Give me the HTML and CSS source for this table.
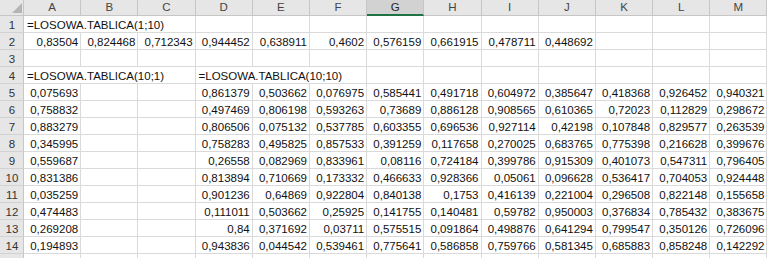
FILE: index.html
```html
<!DOCTYPE html>
<html lang="pl">
<head>
    <meta charset="UTF-8">
    <meta name="viewport" content="width=device-width, initial-scale=1.0">
    <title>LOSOWA.TABLICA</title>
    <link rel="stylesheet" href="styles.css">
</head>
<body>

    <!-- Spreadsheet grid, filled in by the script below -->
    <div class="sheet" id="sheet">
        <div class="cell head corner">
            <svg width="10" height="10" viewBox="0 0 10 10"><polygon points="10,0 10,10 0,10" fill="#b4b4b4"/></svg>
        </div>
    </div>

    <script>
        var columns = ['A', 'B', 'C', 'D', 'E', 'F', 'G', 'H', 'I', 'J', 'K', 'L', 'M'];
        var activeColumn = 'G';

        // text cells are [text, span], numbers are plain strings
        var rows = [
            [['=LOSOWA.TABLICA(1;10)', 3]],
            ['0,83504', '0,824468', '0,712343', '0,944452', '0,638911', '0,4602', '0,576159', '0,661915', '0,478711', '0,448692'],
            [],
            [['=LOSOWA.TABLICA(10;1)', 3], ['=LOSOWA.TABLICA(10;10)', 3]],
            ['0,075693', '', '', '0,861379', '0,503662', '0,076975', '0,585441', '0,491718', '0,604972', '0,385647', '0,418368', '0,926452', '0,940321'],
            ['0,758832', '', '', '0,497469', '0,806198', '0,593263', '0,73689', '0,886128', '0,908565', '0,610365', '0,72023', '0,112829', '0,298672'],
            ['0,883279', '', '', '0,806506', '0,075132', '0,537785', '0,603355', '0,696536', '0,927114', '0,42198', '0,107848', '0,829577', '0,263539'],
            ['0,345995', '', '', '0,758283', '0,495825', '0,857533', '0,391259', '0,117658', '0,270025', '0,683765', '0,775398', '0,216628', '0,399676'],
            ['0,559687', '', '', '0,26558', '0,082969', '0,833961', '0,08116', '0,724184', '0,399786', '0,915309', '0,401073', '0,547311', '0,796405'],
            ['0,831386', '', '', '0,813894', '0,710669', '0,173332', '0,466633', '0,928366', '0,05061', '0,096628', '0,536417', '0,704053', '0,924448'],
            ['0,035259', '', '', '0,901236', '0,64869', '0,922804', '0,840138', '0,1753', '0,416139', '0,221004', '0,296508', '0,822148', '0,155658'],
            ['0,474483', '', '', '0,111011', '0,503662', '0,25925', '0,141755', '0,140481', '0,59782', '0,950003', '0,376834', '0,785432', '0,383675'],
            ['0,269208', '', '', '0,84', '0,371692', '0,03711', '0,575515', '0,091864', '0,498876', '0,641294', '0,799547', '0,350126', '0,726096'],
            ['0,194893', '', '', '0,943836', '0,044542', '0,539461', '0,775641', '0,586858', '0,759766', '0,581345', '0,685883', '0,858248', '0,142292']
        ];

        var sheet = document.getElementById('sheet');

        function addCell(className, text) {
            var cell = document.createElement('div');
            cell.className = 'cell ' + className;
            cell.textContent = text;
            sheet.appendChild(cell);
        }

        function addRow(label, row) {
            addCell('rowhead', label);
            var used = 0;
            row.forEach(function(value) {
                if (Array.isArray(value)) {
                    addCell('text span' + value[1], value[0]);
                    used += value[1];
                } else {
                    addCell('num', value);
                    used += 1;
                }
            });
            for (; used < columns.length; used++) {
                addCell('num', '');
            }
        }

        // Column headers
        columns.forEach(function(name) {
            addCell(name === activeColumn ? 'head active' : 'head', name);
        });

        rows.forEach(function(row, i) {
            addRow(i + 1, row);
        });

        // next row only peeks in at the bottom edge
        addRow('', []);
    </script>

</body>
</html>
```

FILE: styles.css
```css
body {
    margin: 0;
    background-color: #fff;
    font-family: "Liberation Sans", Arial, sans-serif;
    font-size: 11.5px;
    color: #111;
    overflow: hidden;
}
.sheet {
    display: grid;
    grid-template-columns: 24px repeat(13, 57.2px);
    grid-template-rows: 16px;
    grid-auto-rows: 17px;
}
.cell {
    box-sizing: border-box;
    border-right: 1px solid #dadada;
    border-bottom: 1px solid #dadada;
    padding: 3px 2px 0 3px;
    line-height: 13px;
    white-space: nowrap;
}
.num {
    text-align: right;
}
.span3 {
    grid-column: span 3;
}
.head {
    background-color: #e6e6e6;
    border-color: #c6c6c6;
    color: #444;
    text-align: center;
    padding: 1px 0 0;
}
.head.active {
    background-color: #d2d2d2;
    border-bottom: 2px solid #217346;
    color: #262626;
}
.corner {
    display: flex;
    justify-content: flex-end;
    align-items: flex-end;
    padding: 0 1px 2px 0;
}
.rowhead {
    background-color: #e6e6e6;
    border-right-color: #c6c6c6;
    border-bottom-color: #d2d2d2;
    color: #333;
    text-align: center;
}
```
